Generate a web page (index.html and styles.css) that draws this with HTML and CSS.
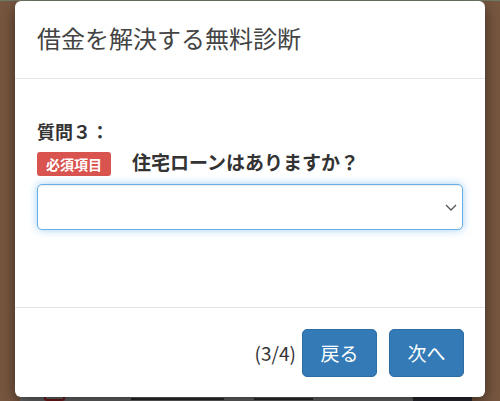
FILE: index.html
```html
<!DOCTYPE html>
<html lang="ja">
<head>
  <meta charset="UTF-8">
  <meta name="viewport" content="width=device-width, initial-scale=1.0">
  <title>借金を解決する無料診断</title>
  <link rel="stylesheet" href="styles.css">
</head>
<body>

  <div class="page">
    <div class="page-top"></div>
    <div class="page-fill"></div>
    <div class="page-card">
      <span class="page-mark"></span>
      <span class="page-line"></span>
      <span class="page-line short"></span>
      <span class="page-photo"></span>
    </div>
  </div>

  <!-- Diagnosis dialog -->
  <div class="modal">
    <div class="modal-header">
      <h4 class="modal-title">借金を解決する無料診断</h4>
    </div>

    <div class="modal-body">
      <p class="question-no">質問３：</p>
      <div class="question-row">
        <span class="label-required">必須項目</span>
        <span class="question-text">住宅ローンはありますか？</span>
      </div>
      <div class="select-wrap">
        <select class="form-control" id="answerSelect">
          <option value=""></option>
          <option value="yes">はい</option>
          <option value="no">いいえ</option>
        </select>
        <svg class="select-arrow" width="12" height="7" viewBox="0 0 12 7">
          <path d="M1 1 L6 6 L11 1" fill="none" stroke="#555" stroke-width="1.3"/>
        </svg>
      </div>
    </div>

    <div class="modal-footer">
      <span class="step">(3/4)</span>
      <button class="btn" id="backButton">戻る</button>
      <button class="btn" id="nextButton">次へ</button>
    </div>
  </div>

</body>
</html>
```

FILE: styles.css
```css
body {
  margin: 0;
  width: 500px;
  height: 401px;
  overflow: hidden;
  position: relative;
  background-color: #785740;
  font-family: "Noto Sans CJK JP", "Noto Sans", sans-serif;
  color: #333;
}

.page {
  height: 100%;
  display: flex;
  flex-direction: column;
}

.page-top {
  height: 1px;
  background-color: #6e7a68;
}

.page-fill {
  flex: 1;
}

.page-card {
  height: 5px;
  margin: 0 28px 0 20px;
  background-color: #6c6c6c;
  display: flex;
  align-items: flex-end;
  padding-left: 24px;
  overflow: hidden;
}

.page-mark {
  width: 20px;
  height: 8px;
  border: 2px solid #7a1c1c;
  border-top: none;
  border-radius: 0 0 3px 3px;
  margin-right: 66px;
}

.page-line {
  width: 110px;
  height: 2px;
  margin-bottom: 1px;
  margin-right: 30px;
  background-color: #2e2e2e;
}

.page-line.short {
  width: 70px;
  margin-right: 100px;
}

.page-photo {
  width: 70px;
  height: 5px;
  background-color: #2a2a30;
}

.modal {
  position: absolute;
  top: 1px;
  left: 15px;
  width: 470px;
  height: 396px;
  background-color: #fff;
  border-radius: 6px;
  box-shadow: 0 5px 15px rgba(0, 0, 0, 0.5);
  display: flex;
  flex-direction: column;
}

.modal-header {
  height: 77px;
  padding: 0 22px;
  border-bottom: 1px solid #e5e5e5;
  display: flex;
  align-items: center;
}

.modal-title {
  margin: 0;
  font-size: 24px;
  font-weight: normal;
  color: #444;
  line-height: 1.2;
  margin-top: -2px;
}

.modal-body {
  height: 229px;
  padding: 39px 22px 0;
  border-bottom: 1px solid #e5e5e5;
  box-sizing: border-box;
}

.question-no {
  margin: 0;
  font-size: 18px;
  font-weight: bold;
  line-height: 27px;
}

.question-row {
  display: flex;
  align-items: center;
  gap: 21px;
  margin-top: 7px;
}

.label-required {
  background-color: #d9534f;
  color: #fff;
  font-size: 14px;
  font-weight: bold;
  line-height: 24px;
  padding: 0 9px;
  border-radius: 3px;
}

.question-text {
  font-size: 19px;
  font-weight: 600;
  line-height: 22px;
  margin-top: -4px;
}

.select-wrap {
  position: relative;
  margin-top: 8px;
}

.form-control {
  display: block;
  width: 100%;
  height: 46px;
  box-sizing: border-box;
  appearance: none;
  -webkit-appearance: none;
  background-color: #fff;
  border: 1px solid #66afe9;
  border-radius: 5px;
  outline: none;
  box-shadow: inset 0 1px 1px rgba(0, 0, 0, 0.075), 0 0 8px rgba(102, 175, 233, 0.6);
  font-family: inherit;
  font-size: 18px;
}

.select-arrow {
  position: absolute;
  right: 6px;
  top: 20px;
}

.modal-footer {
  flex: 1;
  display: flex;
  align-items: center;
  justify-content: flex-end;
  padding: 0 21px 0;
}

.step {
  font-size: 19px;
  color: #333;
  margin-right: 6px;
}

.btn {
  width: 75px;
  height: 48px;
  margin-left: 12px;
  background-color: #337ab7;
  color: #fff;
  border: 1px solid #2e6da4;
  border-radius: 5px;
  font-family: inherit;
  font-size: 19px;
  cursor: pointer;
}

.step + .btn {
  margin-left: 0;
}

.btn:hover {
  background-color: #286090;
}
```
